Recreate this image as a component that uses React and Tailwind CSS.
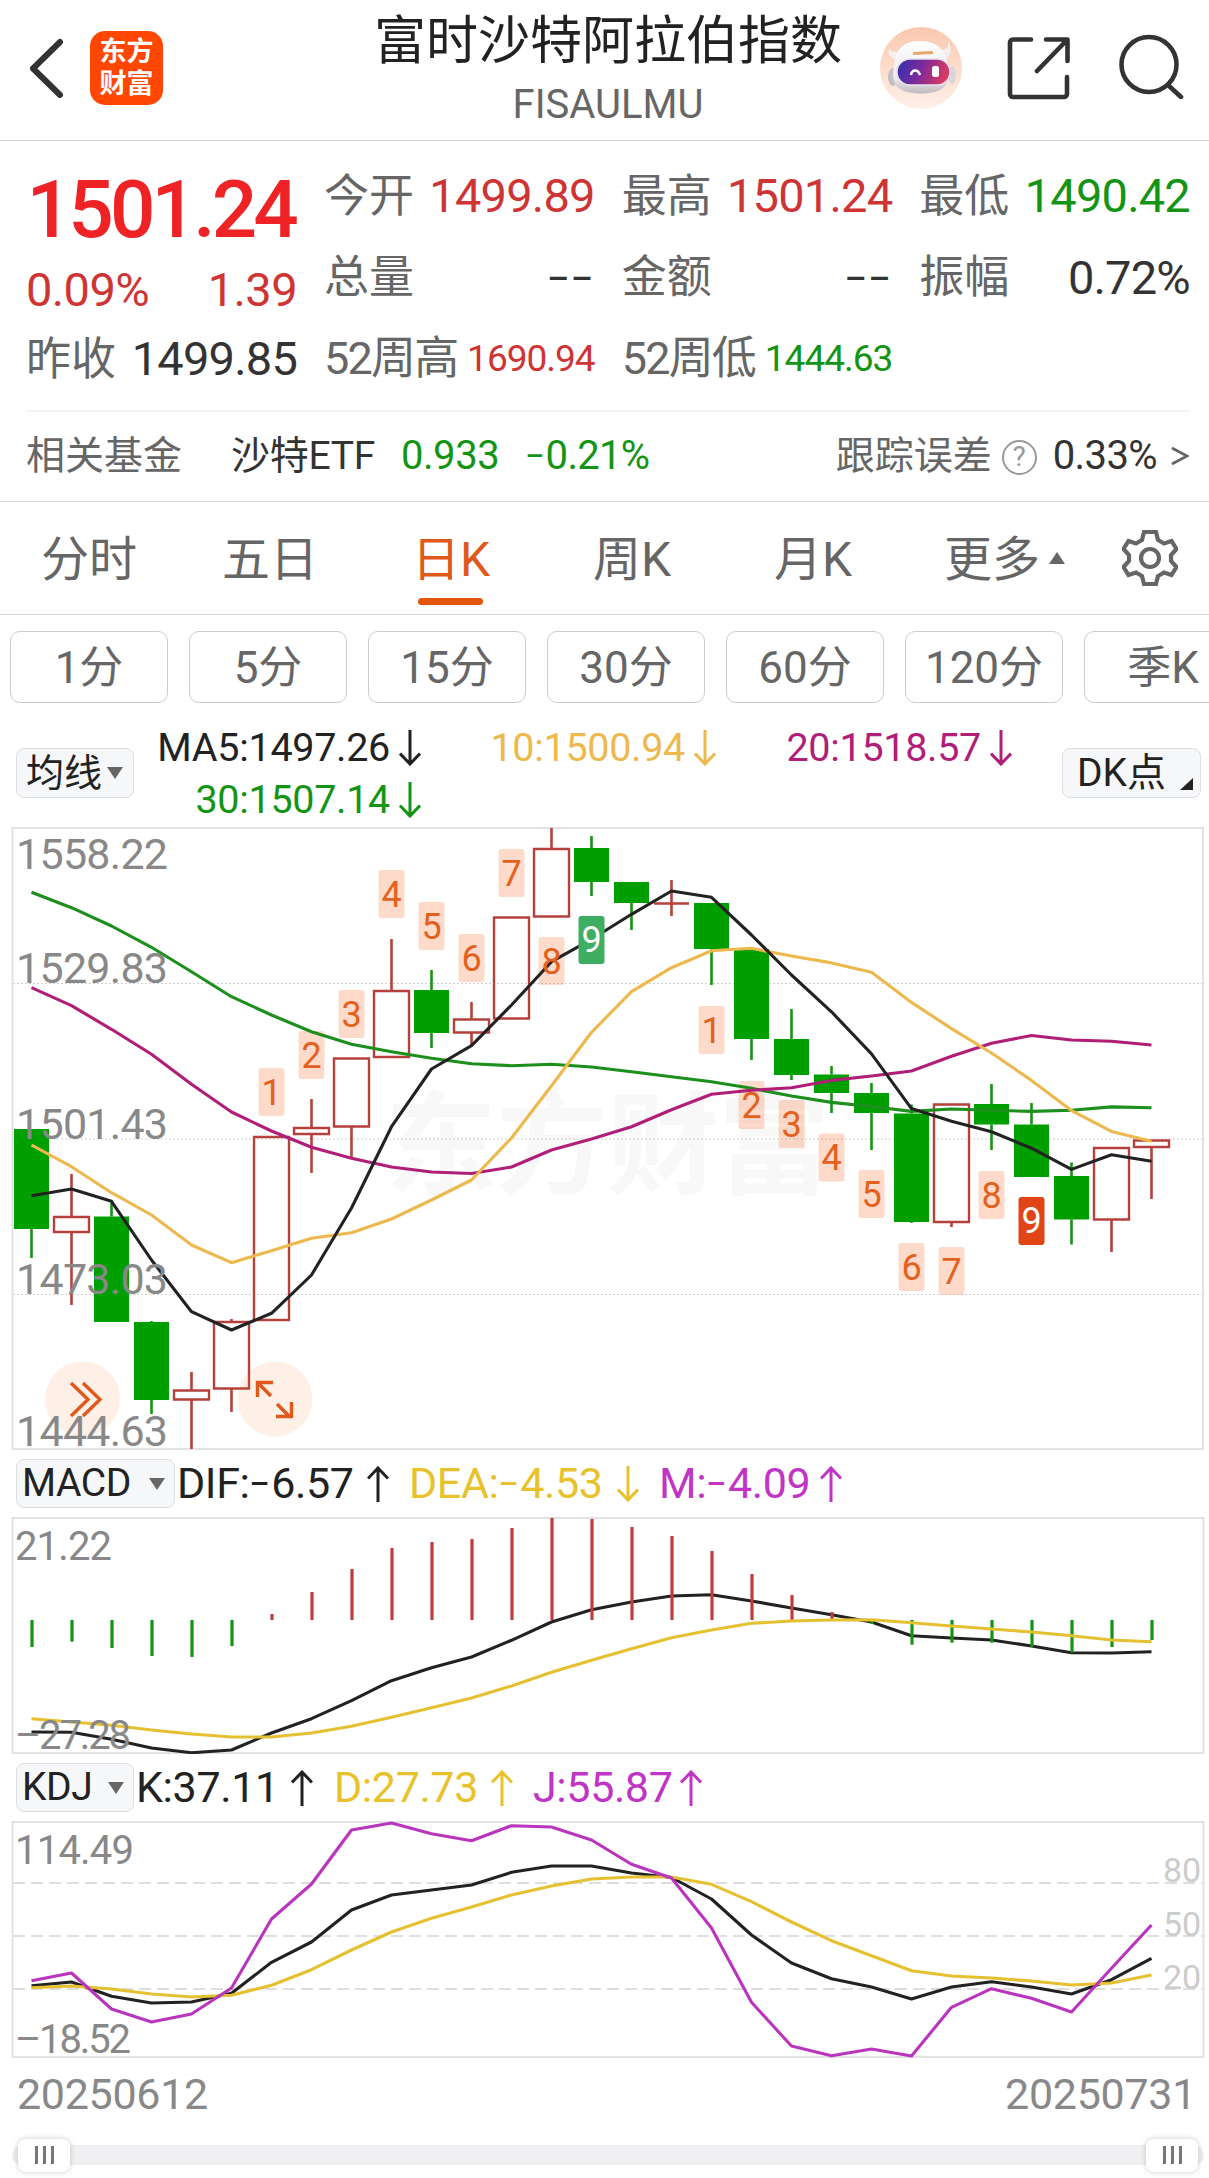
import clsx from 'clsx';

const RED = '#b5403c';
const GREEN = '#009f00';

// [up, high, top, bottom, low]
const candles = [
  [0, 1129, 1129, 1229, 1258], [1, 1174, 1217, 1232, 1305], [0, 1203, 1216.5, 1322, 1322],
  [0, 1321, 1322, 1400, 1414], [1, 1372, 1390.5, 1399.5, 1449], [1, 1319, 1322, 1388.5, 1412],
  [1, 1137, 1137, 1320, 1320], [1, 1099, 1128, 1134, 1173], [1, 1058, 1058.5, 1126.5, 1157],
  [1, 939, 991, 1057, 1057], [0, 970, 990, 1033, 1048], [1, 1002, 1019.5, 1032.5, 1045],
  [1, 917, 917.5, 1018.5, 1018], [1, 828, 849, 916.5, 916], [0, 836, 848, 882, 896],
  [0, 882, 882, 903, 930], [1, 880, 903.5, 903.5, 916], [0, 903, 903, 949, 985],
  [0, 949, 949, 1039, 1060], [0, 1009, 1039, 1075, 1080], [0, 1066, 1074.5, 1093, 1113],
  [0, 1083, 1093, 1113, 1150], [0, 1104.5, 1113.5, 1222, 1223], [1, 1104, 1104.5, 1222, 1227],
  [0, 1084, 1104, 1124.5, 1150], [0, 1103, 1124.5, 1177, 1177], [0, 1162.5, 1176, 1219.5, 1244.5],
  [1, 1147, 1148, 1219.5, 1252], [1, 1140, 1140.5, 1147, 1199],
];

const ma5 = [1195.7, 1189, 1201.3, 1260, 1311.7, 1330, 1313.3, 1275, 1208, 1126.7, 1069, 1045.7, 1005, 961.7, 939.3, 914.3, 891, 897.3, 935, 975, 1011.8, 1053.9, 1108.6, 1121.2, 1131.8, 1148.2, 1169.4, 1154.7, 1161.2];
const ma10 = [1145, 1166.7, 1192.7, 1215, 1245, 1262.7, 1250.7, 1238.3, 1232.7, 1219, 1200, 1180, 1138, 1085.7, 1032.3, 991.7, 967.7, 950.7, 948.3, 956, 962.9, 972.2, 1002.4, 1028.6, 1053, 1080.4, 1110.6, 1131.4, 1141.2];
const ma20 = [987.7, 1005.7, 1029.3, 1054.3, 1084.3, 1112, 1131, 1147.3, 1158.3, 1167, 1172, 1173.5, 1167, 1150, 1139, 1126.7, 1109.7, 1094.3, 1090.3, 1087.7, 1080.4, 1076, 1071, 1056.3, 1043.3, 1035.5, 1040, 1041.2, 1045];
const ma30 = [892.3, 907.7, 926, 947.3, 971.7, 996.7, 1015, 1031.7, 1044.3, 1051.7, 1058.3, 1063.7, 1065.7, 1064.3, 1067, 1071.7, 1076.7, 1081.7, 1088.3, 1096, 1102.4, 1106.5, 1111.4, 1109, 1110.2, 1111.4, 1110.2, 1106.9, 1107.8];

// nine-turn markers: [candle index, top, digit]
const markers = [
  [6, 1068, 1], [7, 1031, 2], [8, 990, 3], [9, 870, 4], [10, 902, 5], [11, 934, 6], [12, 849, 7], [13, 937, 8],
  [17, 1006, 1], [18, 1081, 2], [19, 1100, 3], [20, 1133.5, 4], [21, 1170, 5], [22, 1243, 6], [23, 1247, 7], [24, 1171, 8],
];
const finalMarkers = [[14, 916, '#3dae62'], [25, 1197, '#e04417']];

const macdBars = [1647, 1641.7, 1648, 1656, 1657, 1646, 1614, 1592, 1569, 1548, 1542, 1539, 1528, 1518, 1519, 1527, 1536, 1551, 1574, 1595, 1612, 1624, 1644.7, 1642.7, 1642.7, 1647, 1652.7, 1647, 1640];
const dif = [1732, 1732.3, 1739.3, 1748, 1752.7, 1750, 1733, 1718.7, 1700.7, 1680.7, 1667.7, 1657, 1640.3, 1622, 1609.7, 1602, 1596, 1594.7, 1601, 1608, 1614.7, 1622, 1635.7, 1638, 1640, 1646, 1652.7, 1653, 1651.7];
const dea = [1718.7, 1722, 1725.3, 1730, 1734, 1737, 1737, 1733, 1726.3, 1717.3, 1707.7, 1698, 1686, 1672.3, 1660.3, 1648.7, 1637.7, 1630, 1623.3, 1621, 1620, 1619.7, 1622.7, 1626, 1629, 1632, 1635.7, 1640, 1641.7];

const kLine = [1985.7, 1982, 1996.3, 2003, 2002, 1993.3, 1962.3, 1942, 1910, 1895, 1890, 1885, 1872.3, 1866, 1866, 1873, 1877.5, 1899, 1935, 1963, 1978.7, 1987, 1999, 1987, 1981.7, 1987, 1994, 1979.7, 1958.3];
const dLine = [1987.7, 1986, 1989, 1994, 1997, 1995.3, 1985.3, 1969.7, 1950, 1932, 1918.3, 1907, 1895, 1886, 1879, 1877, 1877, 1884.3, 1901.7, 1922, 1940.7, 1955.7, 1970.7, 1976, 1978, 1981, 1985, 1983, 1975];
const jLine = [1980.7, 1973, 2009, 2022, 2014, 1988, 1919, 1884, 1830, 1823, 1833.7, 1840.7, 1825.7, 1827, 1840, 1864.3, 1878, 1928, 2002.3, 2046, 2055.7, 2049, 2056, 2007.3, 1988.7, 1998.3, 2012, 1968.3, 1925];

const cx = (i) => 31.5 + i * 40;

const Line = ({ data, color }) => (
  <polyline
    points={data.map((y, i) => `${cx(i)},${y}`).join(' ')}
    fill="none"
    stroke={color}
    strokeWidth="3.1"
    strokeLinejoin="round"
  />
);

const Label = ({ x, y, w, size = 43, color = '#888', children }) => (
  <text x={x} y={y} textLength={w} fontSize={size} fill={color}>{children}</text>
);

// Digits with a shorter dash than the font's own
const Num = ({ children }) => (
  <span className="whitespace-nowrap">
    {children.split('').map((ch, i) => (
      ch === '–' ? <span key={i} className="relative -top-[0.1em] text-[0.72em] font-medium tracking-[0.06em]">–</span> : ch
    ))}
  </span>
);

const Arrow = ({ down }) => (
  <svg viewBox="0 0 22 36" className={clsx('h-9 w-[22px]', down && 'rotate-180')} fill="none" stroke="currentColor" strokeWidth="3">
    <path d="M11 36V2M1 12.5L11 2l10 10.5" />
  </svg>
);

const Caret = () => (
  <svg viewBox="0 0 16 12" className="h-3 w-4" fill="#666"><path d="M0 0h16L8 12z" /></svg>
);

const Header = () => (
  <header className="relative flex h-[141px] items-start justify-between border-b border-[#d4d4d4]">
    <div className="flex items-center pt-[31px] pl-[28px]">
      <svg viewBox="0 0 36 60" className="h-[60px] w-9" fill="none" stroke="#333" strokeWidth="6" strokeLinecap="round" strokeLinejoin="round">
        <path d="M32 4L5 30.500l27 26.500" />
      </svg>
      <div className="ml-[26px] flex h-[74px] w-[73px] flex-col items-center justify-center rounded-[15px] bg-[#ff4603] text-[27px] leading-[32px] font-bold text-white">
        <span>东方</span>
        <span>财富</span>
      </div>
    </div>
    <div className="absolute inset-x-0 top-0 flex flex-col items-center pl-[7px]">
      <h1 className="mt-[8px] text-[52px] leading-[68px] text-[#222]">富时沙特阿拉伯指数</h1>
      <p className="text-[40px] leading-[58px] text-[#666]">FISAULMU</p>
    </div>
    <div className="flex pt-[27px] pr-[25px]">
      <svg viewBox="0 0 82 82" className="size-[82px]">
        <defs>
          <linearGradient id="halo" x1="0" y1="0" x2="0" y2="1">
            <stop offset="0" stopColor="#fbc8ae" />
            <stop offset="1" stopColor="#fff0e9" />
          </linearGradient>
          <linearGradient id="visor" x1="0" y1="0" x2="1" y2="0.2">
            <stop offset="0" stopColor="#3030b0" />
            <stop offset="0.5" stopColor="#7a2a9c" />
            <stop offset="1" stopColor="#d83a62" />
          </linearGradient>
          <linearGradient id="shell" x1="0" y1="0" x2="0" y2="1">
            <stop offset="0" stopColor="#fff" />
            <stop offset="0.7" stopColor="#eeebee" />
            <stop offset="1" stopColor="#c0b8c0" />
          </linearGradient>
        </defs>
        <circle cx="41" cy="41" r="41" fill="url(#halo)" />
        <path d="M9 22c-2 5 1 9 8 11l6-9c-8 2-11 1-14-2zM68 14c1 6-1 9-7 9l5 9c6-4 6-12 2-18z" fill="#f4eeee" />
        <ellipse cx="13" cy="50" rx="5" ry="9" fill="#c4bfc5" />
        <ellipse cx="72" cy="48" rx="4" ry="9" fill="#d9d5d9" />
        <path d="M40 14c13 0 22 5 26 17 5 14 4 26-4 31-10 6-32 6-42 0-8-5-8-14-5-29 2-12 10-19 25-19z" fill="url(#shell)" />
        <rect x="17" y="32" width="53" height="26" rx="13" fill="url(#visor)" stroke="#e8e0ea" strokeWidth="1.500" />
        <path d="M33 25l20-1v3l-20 1z" fill="#e6a86c" />
        <path d="M31 48c1-6 7-6 9 0" fill="none" stroke="#fff" strokeWidth="2.5" />
        <rect x="52" y="39" width="7" height="11" rx="2.500" fill="#fff" />
      </svg>
      <svg viewBox="0 0 66 66" className="mt-[8px] ml-[44px] size-[66px]" fill="none" stroke="#333" strokeWidth="4.600" strokeLinecap="round" strokeLinejoin="round">
        <path d="M25 4.500H7a3 3 0 0 0-3 3V59a3 3 0 0 0 3 3h51a3 3 0 0 0 3-3V42M40 4.500h21.500V26M61 5L31 36" />
      </svg>
      <svg viewBox="0 0 66 66" className="mt-[6px] ml-[46px] size-[66px]" fill="none" stroke="#333" strokeWidth="4.600" strokeLinecap="round">
        <circle cx="31" cy="31.500" r="27.500" />
        <path d="M50 52l13 12" />
      </svg>
    </div>
  </header>
);

const Quote = ({ label, value, color = 'text-[#333]', small }) => (
  <div className="flex h-[81px] items-center justify-between pt-[2px]">
    <span className={clsx('-ml-[2px] text-[45px] text-[#666]', small && 'tracking-[-1.8px]')}>{label}</span>
    <span className={clsx(color, small ? 'text-[37px] tracking-[-1px]' : 'text-[47px] tracking-[-0.8px]')}><Num>{value}</Num></span>
  </div>
);

const QuotePanel = () => (
  <section className="pt-[14px]">
    <div className="flex gap-[29px] pr-[19px] pl-[28px]">
      <div className="w-[269px]">
        <div className="flex h-[107px] items-center justify-end pt-[2px] pr-[2px] text-[80px] font-medium tracking-[-3.8px] text-[#ef2325]">1501.24</div>
        <div className="flex h-[56px] items-center justify-between text-[47px] tracking-[-0.6px] text-[#cf3434]">
          <span className="-ml-[2px]">0.09%</span>
          <span>1.39</span>
        </div>
        <Quote label="昨收" value="1499.85" />
      </div>
      <div className="grid flex-1 grid-cols-3 gap-x-[29px]">
        <Quote label="今开" value="1499.89" color="text-[#cf3434]" />
        <Quote label="最高" value="1501.24" color="text-[#cf3434]" />
        <Quote label="最低" value="1490.42" color="text-[#149414]" />
        <Quote label="总量" value="––" />
        <Quote label="金额" value="––" />
        <Quote label="振幅" value="0.72%" />
        <Quote label="52周高" value="1690.94" color="text-[#cf3434]" small />
        <Quote label="52周低" value="1444.63" color="text-[#149414]" small />
      </div>
    </div>
    <div className="mt-[11px] mr-[19px] ml-[26px] h-[2px] bg-[#f4f4f4]" />
    <div className="flex h-[90px] items-center border-b border-[#d4d4d4] pr-[20px] pb-[1px] pl-[26px] text-[39px] text-[#666]">
      <span>相关基金</span>
      <span className="ml-[49px] tracking-[-0.3px] text-[#333]">沙特ETF</span>
      <span className="ml-[26px] text-[40px] tracking-[-0.4px] text-[#149414]">0.933</span>
      <span className="ml-[26px] text-[40px] tracking-[-0.7px] text-[#149414]"><Num>–0.21%</Num></span>
      <span className="ml-auto">跟踪误差</span>
      <span className="mt-[2px] ml-[10px] flex size-[35px] items-center justify-center rounded-full border-[2.500px] border-[#999] text-[28px] text-[#999]">?</span>
      <span className="ml-[16px] text-[40px] tracking-[-0.6px] text-[#333]">0.33%</span>
      <svg viewBox="0 0 18 20" className="ml-[14px] h-5 w-[18px]" fill="none" stroke="#666" strokeWidth="2.800">
        <path d="M1 2l15 8L1 18" />
      </svg>
    </div>
  </section>
);

const Tabs = () => (
  <nav className="flex h-[113px] items-center border-b border-[#d4d4d4] text-[48px] text-[#666]">
    {['分时', '五日', '日K', '周K', '月K'].map((t) => (
      <div key={t} className={clsx('relative flex h-full w-[181px] items-center justify-center pt-[3px] pr-[3px]', t === '日K' && 'text-[#e0581a]')}>
        {t}
        {t === '日K' && <span className="absolute bottom-[9px] left-[56px] h-[7px] w-[65px] rounded-full bg-[#e3560b]" />}
      </div>
    ))}
    <span className="ml-[39px] pt-[3px]">更多</span>
    <svg viewBox="0 0 16 12" className="ml-[9px] h-3 w-4" fill="#666"><path d="M0 12h16L8 0z" /></svg>
    <svg viewBox="0 0 56 58" className="ml-[57px] h-[58px] w-14" fill="none" stroke="#666" strokeWidth="4.200">
      <path d="M22 3h12l2 8 6 3.500 7.500-2.500 5 8-5.500 6v6l5.500 6-5 8-7.500-2.500-6 3.500-2 8H22l-2-8-6-3.500-7.500 2.500-5-8L7 32v-6l-5.500-6 5-8 7.500 2.500 6-3.500z" />
      <circle cx="28" cy="29" r="9" />
    </svg>
  </nav>
);

const Periods = () => (
  <div className="flex gap-[21px] overflow-hidden pt-[16px] pl-[10px]">
    {['1分', '5分', '15分', '30分', '60分', '120分', '季K'].map((t) => (
      <button key={t} className="h-[72px] w-[158px] shrink-0 rounded-[10px] border-[1.500px] border-[#ccc] pt-[2px] text-[44px] text-[#666]">{t}</button>
    ))}
  </div>
);

const Averages = () => (
  <div className="flex h-[124px] items-start">
    <button className="mt-[45px] ml-[16px] flex h-[50px] w-[118px] items-center rounded-lg border border-[#dcdfe3] bg-[#f6f7f9] pl-[9px] text-[38px] text-[#222]">
      均线<span className="ml-[5px]"><Caret /></span>
    </button>
    <div className="grid grid-cols-[287px_295px_296px] gap-y-0 pt-[19px] text-[39.500px] tracking-[-0.3px]">
      {[
        ['MA5:1497.26', 'text-[#222]'],
        ['10:1500.94', 'text-[#edb84e]'],
        ['20:1518.57', 'text-[#b01e78]'],
        ['30:1507.14', 'text-[#149414]'],
      ].map(([t, c]) => (
        <div key={t} className={clsx('flex h-[52px] items-center justify-end gap-[9px]', c)}>
          {t}
          <Arrow down />
        </div>
      ))}
    </div>
    <button className="relative mt-[45px] ml-[50px] flex h-[50px] w-[139px] items-center rounded-lg border border-[#dcdfe3] bg-[#f6f7f9] pl-[14px] text-[39px] text-[#222]">
      DK点
      <svg viewBox="0 0 13 12" className="absolute right-[7px] bottom-[7px] h-3 w-[13px]" fill="#222"><path d="M13 0v12H0z" /></svg>
    </button>
  </div>
);

const CandleChart = () => (
  <svg viewBox="0 827 1209 623" className="block h-[623px] w-full">
    <text x="385" y="1186" textLength="445" fontSize="112" fontWeight="700" fill="#f8f8f8">东方财富</text>
    {[983.5, 1139, 1294.5].map((y) => (
      <line key={y} x1="13" x2="1203" y1={y} y2={y} stroke="#cfcfcf" strokeWidth="1" strokeDasharray="2 2" />
    ))}
    <rect x="12.5" y="828" width="1190.500" height="621" fill="none" stroke="#e2e2e2" strokeWidth="2" />
    {candles.map(([up, high, top, bottom, low], i) => (
      <g key={i} stroke={up ? RED : '#149414'} strokeWidth="2.600">
        <line x1={cx(i)} x2={cx(i)} y1={high} y2={top} />
        <line x1={cx(i)} x2={cx(i)} y1={bottom} y2={low} />
        {up
          ? <path d={`M${cx(i) - 17.5} ${top}h35V${bottom}h-35z`} fill="none" strokeWidth="2.400" />
          : <rect x={cx(i) - 17.5} y={top} width="35" height={bottom - top} fill={GREEN} stroke="none" />}
      </g>
    ))}
    {markers.map(([i, top]) => (
      <rect key={i} x={cx(i) - 13} y={top} width="26" height="48" rx="3" fill="#f97b3d" fillOpacity="0.28" />
    ))}
    <Line data={ma30} color="#1c8f1c" />
    <Line data={ma20} color="#b01e78" />
    <Line data={ma10} color="#edb84e" />
    <Line data={ma5} color="#222" />
    {markers.map(([i, top, n]) => (
      <text key={i} x={cx(i)} y={top + 36.5} textAnchor="middle" fontSize="36" fill="#e3611c">{n}</text>
    ))}
    {finalMarkers.map(([i, top, fill]) => (
      <g key={i}>
        <rect x={cx(i) - 13} y={top} width="26" height="48" rx="3" fill={fill} />
        <text x={cx(i)} y={top + 36} textAnchor="middle" fontSize="36" fill="#fff">9</text>
      </g>
    ))}
    <circle cx="82.500" cy="1399" r="37.500" fill="#f97b3d" fillOpacity="0.12" />
    <circle cx="275" cy="1399" r="37.500" fill="#f97b3d" fillOpacity="0.12" />
    <g fill="none" stroke="#e0581a" strokeWidth="3.400">
      <path d="M71 1383l17 16.500-17 16.500M83 1383l17 16.500-17 16.500" />
      <path d="M271 1396l-13-13M257.500 1397v-14.500H273M277 1404l13 13M276 1416.500h15.500V1402" />
    </g>
    <Label x="16" y="869" w="152">1558.22</Label>
    <Label x="16" y="983" w="152">1529.83</Label>
    <Label x="16" y="1139" w="152">1501.43</Label>
    <Label x="16" y="1294" w="152">1473.03</Label>
    <Label x="16" y="1446" w="152">1444.63</Label>
  </svg>
);

const IndicatorBar = ({ name, wide, items }) => (
  <div className="flex h-[67px] items-center text-[43px] tracking-[-0.4px]">
    <button className={clsx('ml-[16px] flex h-[49px] items-center justify-between rounded-lg border border-[#dcdfe3] bg-[#f6f7f9] pr-[9px] pl-[5px] text-[39px] text-[#222]', wide ? 'w-[159px]' : 'w-[118px]')}>
      {name}
      <Caret />
    </button>
    {items.map(([text, color, down, width]) => (
      <div key={text} className={clsx('flex items-center justify-between', color, width)}>
        <Num>{text}</Num>
        <Arrow down={down} />
      </div>
    ))}
  </div>
);

const MacdChart = () => (
  <svg viewBox="0 1517 1209 237" className="block h-[237px] w-full">
    <rect x="12.500" y="1518" width="1191" height="235" fill="none" stroke="#e2e2e2" strokeWidth="2" />
    <Line data={dif} color="#222" />
    {macdBars.map((y, i) => (
      <line key={i} x1={cx(i) + 0.5} x2={cx(i) + 0.5} y1="1620" y2={y} stroke={y < 1620 ? '#c03c3c' : '#149414'} strokeWidth="3.200" />
    ))}
    <Line data={dea} color="#e5c132" />
    <Label x="15" y="1559.500" w="97" size={40}>21.22</Label>
    <Label x="15" y="1748.500" w="116" size={40}>–27.28</Label>
  </svg>
);

const KdjChart = () => (
  <svg viewBox="0 1821 1209 237" className="block h-[237px] w-full">
    {[1883, 1936, 1989].map((y) => (
      <line key={y} x1="13" x2="1203" y1={y} y2={y} stroke="#dedede" strokeWidth="2" strokeDasharray="12 6" />
    ))}
    <rect x="12.500" y="1822" width="1191" height="235" fill="none" stroke="#e2e2e2" strokeWidth="2" />
    <Label x="1163" y="1882" w="38" size={34} color="#ccc">80</Label>
    <Label x="1163" y="1936" w="38" size={34} color="#ccc">50</Label>
    <Label x="1163" y="1989" w="38" size={34} color="#ccc">20</Label>
    <Line data={kLine} color="#222" />
    <Line data={dLine} color="#e5c132" />
    <Line data={jLine} color="#b935bd" />
    <Label x="15" y="1864" w="119" size={40}>114.49</Label>
    <Label x="15" y="2053" w="116" size={40}>–18.52</Label>
  </svg>
);

const Thumb = () => (
  <div className="flex h-[33px] w-[52px] items-center justify-center gap-[5px] rounded-lg bg-white shadow-[0_0_6px_rgba(0,0,0,0.2)]">
    <i className="h-[18px] w-[3px] bg-[#777]" />
    <i className="h-[18px] w-[3px] bg-[#777]" />
    <i className="h-[18px] w-[3px] bg-[#777]" />
  </div>
);

export default function App() {
  return (
    <div className="h-[2178px] w-[1209px] overflow-hidden bg-white font-[Roboto,'Noto_Sans_CJK_SC',sans-serif]">
      <Header />
      <QuotePanel />
      <Tabs />
      <Periods />
      <Averages />
      <CandleChart />
      <IndicatorBar
        name="MACD"
        wide
        items={[
          ['DIF:–6.57', 'text-[#222]', false, 'ml-[2px] w-[212px]'],
          ['DEA:–4.53', 'text-[#e8c22c]', true, 'ml-[20px] w-[230px]'],
          ['M:–4.09', 'text-[#c034c6]', false, 'ml-[20px] w-[183px]'],
        ]}
      />
      <MacdChart />
      <IndicatorBar
        name="KDJ"
        items={[
          ['K:37.11', 'text-[#222]', false, 'ml-[2px] w-[177px]'],
          ['D:27.73', 'text-[#e8c22c]', false, 'ml-[21px] w-[179px]'],
          ['J:55.87', 'text-[#c034c6]', false, 'ml-[20px] w-[169px]'],
        ]}
      />
      <KdjChart />
      <div className="flex h-[71px] items-center justify-between pt-[1px] pr-[13px] pl-[17px] text-[43px] tracking-[-0.3px] text-[#888]">
        <span>20250612</span>
        <span>20250731</span>
      </div>
      <div className="flex h-[49px] items-center pt-[3px] pr-[5px] pl-[12px]">
        <div className="flex h-[20px] w-full items-center justify-between rounded-full bg-[#f0f0f3] px-[6px]">
          <Thumb />
          <Thumb />
        </div>
      </div>
    </div>
  );
}
